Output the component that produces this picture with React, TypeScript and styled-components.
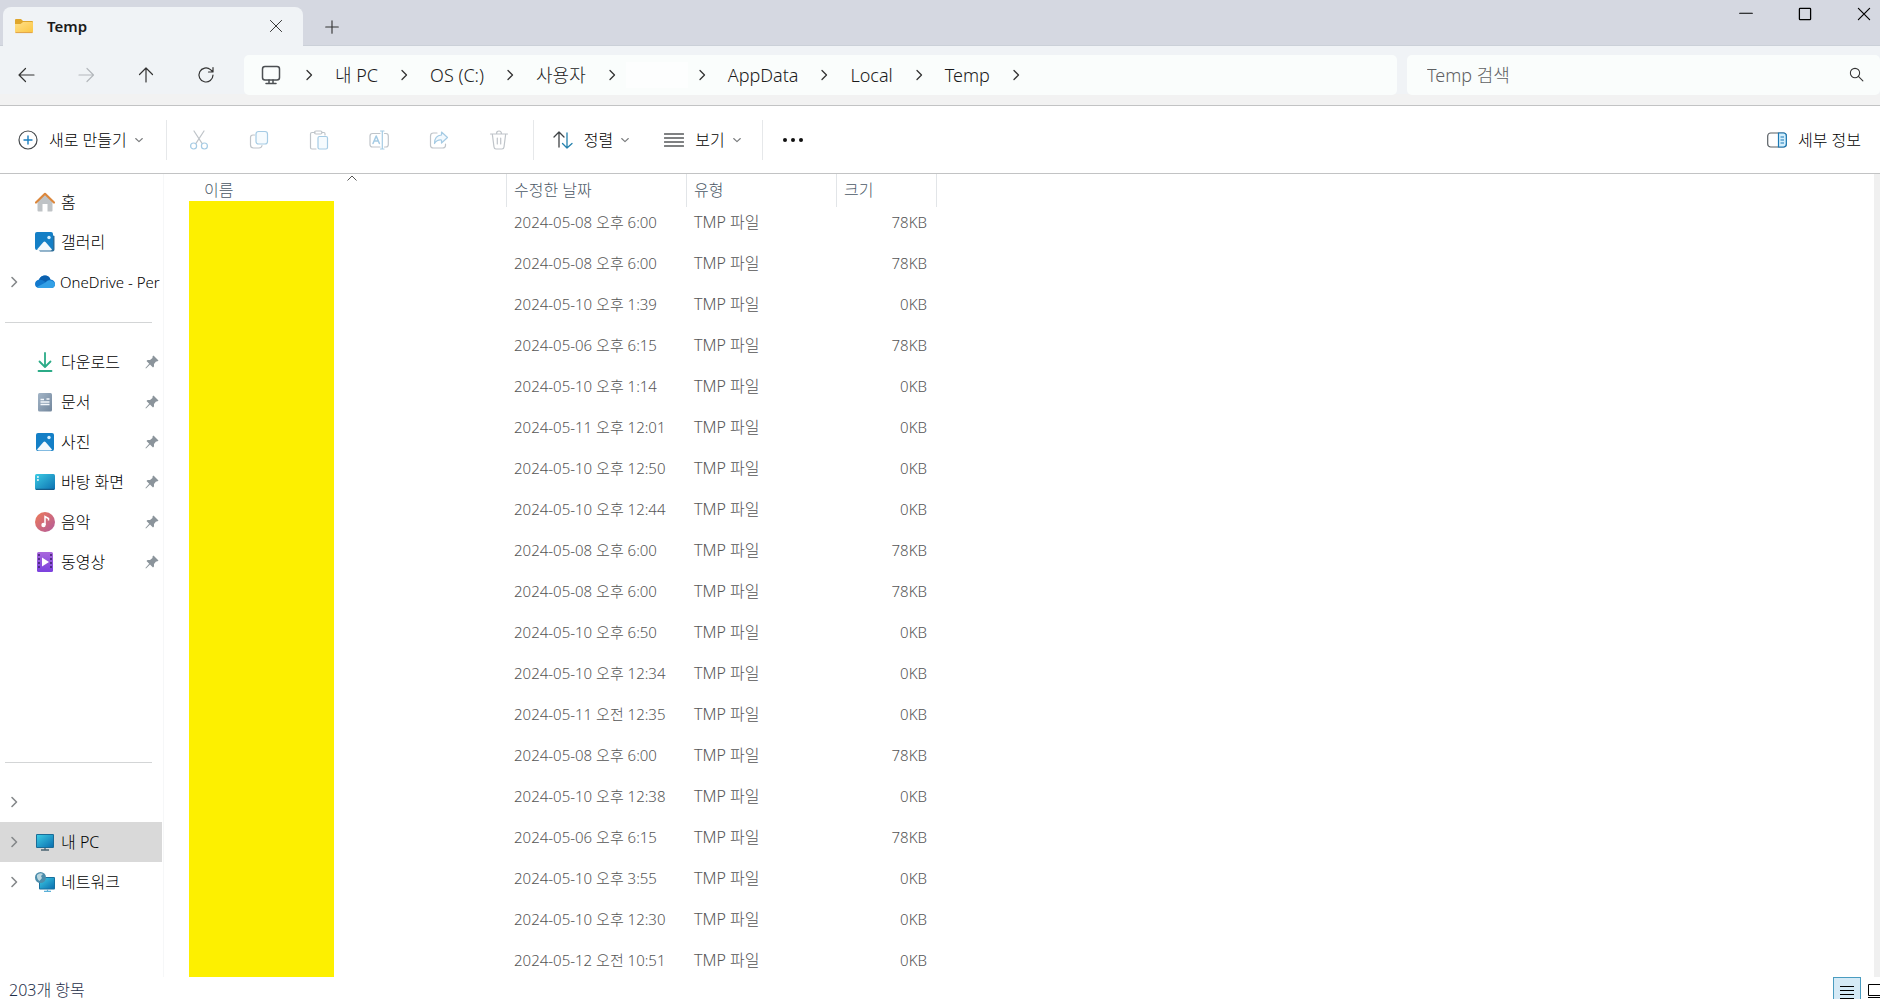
import React from 'react';
import styled, { createGlobalStyle } from 'styled-components';

const GlobalStyle = createGlobalStyle`
  *, *::before, *::after { box-sizing: border-box; }
  body {
    margin: 0;
    background: #fff;
    color: #1b1b1b;
    font-family: "Noto Sans", "Noto Sans CJK KR", sans-serif;
    font-size: 16px;
    font-weight: 300;
  }
  button, input { font: inherit; color: inherit; }
  button { border: 0; padding: 0; background: none; white-space: nowrap; }
  svg { display: block; flex: none; }
`;

const Window = styled.div`
  display: flex;
  flex-direction: column;
  height: 100vh;
  overflow: hidden;
`;

/* Title bar */
const TitleBar = styled.header`
  display: flex;
  height: 46px;
  padding-left: 3px;
  background: #d5d8e1;
  border-bottom: 1px solid #cbd0d8;
`;

const Tab = styled.div`
  display: flex;
  align-items: center;
  width: 300px;
  height: 46px;
  margin-top: 7px;
  margin-bottom: -1px;
  padding: 0 12px 8px;
  border-radius: 8px 8px 0 0;
  background: #f0f3f6;
`;

const TabTitle = styled.span`
  flex: 1;
  padding-left: 12px;
  font-size: 15px;
  font-weight: 600;
`;

const IconButton = styled.button<{ $w?: number; $h?: number }>`
  display: flex;
  align-items: center;
  justify-content: center;
  flex: none;
  width: ${(p) => p.$w ?? 60}px;
  height: ${(p) => p.$h ?? 40}px;
`;

const WindowControls = styled.div`
  display: flex;
  margin-left: auto;
  margin-right: -13px;
`;

/* Navigation bar */
const NavBar = styled.nav`
  display: flex;
  align-items: center;
  height: 60px;
  padding-bottom: 2px;
  background: linear-gradient(#f0f3f6 82%, #f2f2f2 82%);
  border-bottom: 1px solid #c2c3c4;
`;

const NavButtons = styled.div`
  display: flex;
  width: 244px;
  margin-left: -4px;
  margin-right: 4px;
`;

const AddressBar = styled.div`
  display: flex;
  align-items: center;
  flex: 1;
  height: 40px;
  padding-left: 17px;
  border-radius: 5px;
  background: #fafdfc;
`;

const Crumbs = styled.ol`
  display: flex;
  align-items: center;
  margin: 0;
  padding: 0 0 0 22px;
  list-style: none;
  font-size: 18px;
`;

const Crumb = styled.li`
  display: flex;
  align-items: center;
`;

const CrumbButton = styled.button<{ $blank?: boolean }>`
  height: 26px;
  margin: 0 20px;
  line-height: 24px;
  ${(p) => p.$blank && 'width: 62px; margin: 0 8px; background: #fdfefe;'}
`;

const SearchBox = styled.label`
  display: flex;
  align-items: center;
  width: 473px;
  height: 40px;
  margin-left: 10px;
  padding: 0 16px 0 20px;
  border-radius: 5px;
  background: #fafdfc;
`;

const SearchInput = styled.input`
  flex: 1;
  min-width: 0;
  border: 0;
  padding: 0;
  outline: 0;
  background: none;
  font-size: 18px;
  &::placeholder { color: #5f6163; opacity: 1; }
`;

/* Command bar */
const CommandBar = styled.div`
  display: flex;
  align-items: center;
  height: 68px;
  padding: 0 19px 0 18px;
  border-bottom: 1px solid #c2c3c4;
`;

const Command = styled.button<{ $after?: number }>`
  display: flex;
  align-items: center;
  gap: 7px;
  height: 40px;
  margin-right: ${(p) => p.$after ?? 0}px;
  color: #000;
  line-height: 24px;
`;

const CommandLabel = styled.span`
  padding-left: 4px;
`;

const Separator = styled.span<{ $left: number; $right: number }>`
  width: 1px;
  height: 40px;
  margin: 0 ${(p) => p.$right}px 0 ${(p) => p.$left}px;
  background: #e6e8ea;
`;

const Spacer = styled.div`
  flex: 1;
`;

/* Body */
const Body = styled.div`
  display: flex;
  flex: 1;
  min-height: 0;
`;

const Sidebar = styled.aside`
  display: flex;
  flex-direction: column;
  flex: none;
  width: 164px;
  padding: 8px 1px 0 0;
  border-right: 1px solid #f6f7f8;
  overflow: hidden;
`;

const SideItem = styled.a<{ $active?: boolean }>`
  display: flex;
  align-items: center;
  height: 40px;
  flex: none;
  padding: 0 3px 0 8px;
  overflow: hidden;
  color: #000;
  text-decoration: none;
  white-space: nowrap;
  background: ${(p) => (p.$active ? '#d9d9d9' : 'transparent')};
`;

const Twist = styled.span`
  flex: none;
  width: 27px;
`;

const SideLabel = styled.span<{ $latin?: boolean }>`
  flex: 1;
  min-width: 0;
  padding-left: ${(p) => (p.$latin ? 5 : 6)}px;
  line-height: 24px;
  font-size: ${(p) => (p.$latin ? 15 : 16)}px;
`;

const SideRule = styled.hr`
  flex: none;
  width: 147px;
  height: 1px;
  margin: 20px 0 19px 5px;
  border: 0;
  background: #d3d5d6;
`;

const SideGap = styled.div`
  height: 160px;
  flex: none;
`;

const Files = styled.main`
  position: relative;
  flex: 1;
  overflow: hidden;
`;

const FileTable = styled.table`
  width: 773px;
  table-layout: fixed;
  border-collapse: separate;
  border-spacing: 0;
`;

const Th = styled.th<{ $w: number; $first?: boolean }>`
  width: ${(p) => p.$w}px;
  height: 33px;
  padding: 0 0 2px ${(p) => (p.$first ? 40 : 7)}px;
  border-right: 1px solid #e2e5e8;
  color: #4b5866;
  font-weight: 300;
  line-height: 24px;
  text-align: left;
`;

const Td = styled.td<{ $right?: boolean; $large?: boolean }>`
  height: 41px;
  padding: 0 10px 10px 7px;
  color: #555;
  font-size: ${(p) => (p.$large ? 16 : 15)}px;
  line-height: 31px;
  white-space: nowrap;
  text-align: ${(p) => (p.$right ? 'right' : 'left')};
`;

const SortMark = styled.svg`
  position: absolute;
  top: 1px;
  left: 182px;
`;

const NameCover = styled.div`
  position: absolute;
  top: 27px;
  bottom: 0;
  left: 25px;
  width: 145px;
  background: #fdf000;
`;

const ScrollTrack = styled.div`
  flex: none;
  width: 6px;
  background: #f0f0f0;
`;

const StatusBar = styled.footer`
  display: flex;
  flex: none;
  height: 22px;
  padding-left: 9px;
  color: #1f2f4a;
`;

const ItemCount = styled.span`
  padding-top: 4px;
  line-height: 18px;
`;

const ViewButton = styled.button<{ $on?: boolean }>`
  display: flex;
  justify-content: ${(p) => (p.$on ? 'center' : 'flex-end')};
  flex: none;
  width: ${(p) => (p.$on ? 28 : 19)}px;
  height: 28px;
  padding-top: ${(p) => (p.$on ? 8 : 7)}px;
  ${(p) => p.$on && 'border: 1px solid #4a9cc0; background: #d5eaf6;'}
`;

const Chevron = ({ dir, size = 12, color = '#333', width = 1.3 }: { dir: 'right' | 'down'; size?: number; color?: string; width?: number }) => (
  <svg width={size} height={size} viewBox="0 0 12 12" fill="none" stroke={color} strokeWidth={width} strokeLinecap="round" strokeLinejoin="round">
    <path d={dir === 'right' ? 'M4 1.5 8.5 6 4 10.5' : 'M2 4.2 6 8 10 4.2'} />
  </svg>
);

const Line = ({ children, color = '#333', size = 20, w = 1.2 }: { children: React.ReactNode; color?: string; size?: number; w?: number }) => (
  <svg width={size} height={size} viewBox="0 0 20 20" fill="none" stroke={color} strokeWidth={w} strokeLinecap="round" strokeLinejoin="round">
    {children}
  </svg>
);

const FolderIcon = () => (
  <svg width="20" height="16" viewBox="0 0 20 16">
    <defs>
      <linearGradient id="folder" x1="0" y1="0" x2="1" y2="1">
        <stop offset="0" stopColor="#ffe08a" />
        <stop offset="1" stopColor="#fbc540" />
      </linearGradient>
    </defs>
    <path d="M0 2Q0 1 1 1H6L8 3H17Q18 3 18 4V8H0Z" fill="#dfa62c" />
    <path d="M0 6H5.5L8 4H17Q18 4 18 5V13.5Q18 15 16.5 15H1.5Q0 15 0 13.5Z" fill="url(#folder)" />
    <path d="M.5 14.6H17.5" stroke="#e0a34a" strokeWidth="1" />
  </svg>
);

const pale = '#bfc4c9';
const paleBlue = '#a5cbe4';

const CutIcon = () => (
  <Line color={pale}>
    <path d="M5 1 13.2 13.6M15 1 6.8 13.6" />
    <g stroke={paleBlue}><circle cx="4.600" cy="16" r="3" /><circle cx="15.400" cy="16" r="3" /></g>
  </Line>
);
const CopyIcon = () => (
  <Line color={pale}>
    <path d="M5.5 5H4Q1.500 5 1.500 7.500V15Q1.500 18 4.500 18H10Q12.500 18 13 15.500" />
    <rect x="7" y="1.500" width="11.500" height="12.500" rx="2.500" stroke={paleBlue} fill="#f6fbfe" />
  </Line>
);
const PasteIcon = () => (
  <Line color={pale}>
    <path d="M6 2.500H3Q1.500 2.500 1.500 4V17.500Q1.500 19 3 19H7M13 2.500H15Q16 2.500 16 4V5" />
    <rect x="5.500" y="1" width="7.500" height="3" rx="1.500" />
    <rect x="9" y="6.500" width="9.500" height="12.500" rx="1.500" stroke={paleBlue} fill="#f6fbfe" />
  </Line>
);
const RenameIcon = () => (
  <Line color={pale}>
    <path d="M11 3.500H3.500Q1 3.500 1 6V14.500Q1 17 3.500 17H11M15.500 3.500H17Q19.300 3.500 19.300 6V14.500Q19.300 17 17 17H15.500" />
    <g stroke={paleBlue}><path d="M13.300 1V19M11.500 1H15M11.500 19H15" /><path d="M4 13.500 7.200 6 10.400 13.500M5.200 11H9.200" strokeWidth="1.500" /></g>
  </Line>
);
const ShareIcon = () => (
  <Line color={pale}>
    <path d="M8 3H4.500Q1.500 3 1.500 6V15.500Q1.500 18 4.500 18H13.500Q16.500 18 16.500 15.500V14" />
    <path d="M12.500 2 18.500 7.500 12.500 13V10Q8 9.500 5.500 13.500Q5.500 5.500 12.500 5Z" stroke={paleBlue} fill="#f2f9fe" />
  </Line>
);
const TrashIcon = () => (
  <Line color={pale}>
    <path d="M1.500 4H18.500M3.300 4 5 17Q5.200 19 7 19H13Q14.800 19 15 17L16.700 4M7.500 4Q7.500 1 10 1Q12.500 1 12.500 4M8.300 8V14M11.700 8V14" />
  </Line>
);

const Pin = () => (
  <svg width="14" height="14" viewBox="0 0 14 14">
    <path d="M8.500 .5 13.500 5.500 12 6.500 11 6.500 9 9 9 11.500 8 12.500 5 9.500 1 13.500 .4 13 4.200 8.800 1.500 6 2.500 5 5 5 7.500 3 7.500 1.500Z" fill="#8b949b" />
  </svg>
);

const HomeIcon = () => (
  <svg width="20" height="20" viewBox="0 0 20 20">
    <path d="M2.500 9 10 2.500 17.500 9V18.500Q17.500 19.500 16.500 19.500H12.500V12H7.500V19.500H3.500Q2.500 19.500 2.500 18.500Z" fill="#bfc3c6" />
    <path d="M1 10.500 10 1.800 19 10.500" fill="none" stroke="#dc873c" strokeWidth="2.200" strokeLinecap="round" strokeLinejoin="round" />
  </svg>
);
const PictureIcon = ({ stacked }: { stacked?: boolean }) => (
  <svg width="20" height="20" viewBox="0 0 20 20">
    {stacked && <path d="M5 19.500H17.500Q19.500 19.500 19.500 17.500V4L17 3V17H3Z" fill="#2c6d99" />}
    <rect x={stacked ? 0 : 1} y={stacked ? 0 : 1} width="18" height="18" rx="2" fill="#147fc6" />
    <path d="M2 17.500 8.500 10Q9.500 9 10.500 10L17 17.500Q16.500 18.500 15.500 18.500H3.500Z" fill="#f2f8fc" />
    <circle cx="14" cy="5.500" r="1.700" fill="#d8f1ff" />
  </svg>
);
const CloudIcon = () => (
  <svg width="20" height="14" viewBox="0 0 20 14">
    <path d="M5 13Q0 13 0 9Q0 5.500 4 4.500Q6 .5 10 .5Q14 .5 15.500 4.500Q20 5 20 9Q20 13 16 13Z" fill="#1379cd" />
    <path d="M4 4.500Q6 .5 10 .5Q14 .5 15.500 4.500Q12 5 10.500 7Q8 4.500 4 4.500Z" fill="#0b60ae" />
    <path d="M2 12 10.500 7.500Q14 4 17 6Q20 7 20 9.500Q19.500 13 16 13H5Q3 13 2 12Z" fill="#33a0e6" />
  </svg>
);
const DownloadIcon = () => (
  <svg width="20" height="20" viewBox="0 0 20 20" fill="none" stroke="#2bab87" strokeWidth="1.800" strokeLinecap="round" strokeLinejoin="round">
    <path d="M10 1V14.500M4.500 9.500 10 15 15.500 9.500M3.500 19H16.500" />
  </svg>
);
const DocumentIcon = () => (
  <svg width="20" height="20" viewBox="0 0 20 20">
    <defs><linearGradient id="doc" x1="0" y1="0" x2="1" y2="1"><stop offset="0" stopColor="#a3b5c7" /><stop offset="1" stopColor="#72869c" /></linearGradient></defs>
    <rect x="3" y="1" width="14" height="18.500" rx="1.500" fill="url(#doc)" />
    <path d="M5.500 7.500H9M5.500 10H14.500M5.500 12.500H14.500M11.500 7H14.500" stroke="#f3f7fb" strokeWidth="1.300" />
  </svg>
);
const DesktopIcon = () => (
  <svg width="20" height="20" viewBox="0 0 20 20">
    <defs><linearGradient id="desk" x1="0" y1="0" x2="1" y2="1"><stop offset="0" stopColor="#3ccbe4" /><stop offset="1" stopColor="#0b6fb0" /></linearGradient></defs>
    <rect y="2" width="20" height="16" rx="1.500" fill="url(#desk)" />
    <path d="M2 5H3.800M2 8H3.800" stroke="#fff" strokeWidth="1.500" />
    <path d="M1 17.300H19" stroke="#14507d" />
  </svg>
);
const MusicIcon = () => (
  <svg width="20" height="20" viewBox="0 0 20 20">
    <defs><linearGradient id="music" x1="0" y1="0" x2="1" y2="1"><stop offset="0" stopColor="#ee7b58" /><stop offset="1" stopColor="#b25a9c" /></linearGradient></defs>
    <circle cx="10" cy="10" r="10" fill="url(#music)" />
    <circle cx="8.500" cy="13" r="2.200" fill="#fff" />
    <path d="M10 13V4.500L13.500 6.500V8.500" fill="none" stroke="#fff" strokeWidth="1.500" />
  </svg>
);
const VideoIcon = () => (
  <svg width="20" height="20" viewBox="0 0 20 20">
    <defs><linearGradient id="video" x1="0" y1="0" x2="0" y2="1"><stop offset="0" stopColor="#a968dc" /><stop offset="1" stopColor="#7b41de" /></linearGradient></defs>
    <rect x="2" y="0" width="16" height="20" rx="1.500" fill="url(#video)" />
    <path d="M4 2V18M16 2V18" stroke="#402472" strokeWidth="1.600" strokeDasharray="2 2" />
    <path d="M7 5.500 14 10 7 14.500Z" fill="#fff" />
  </svg>
);
const PcIcon = () => (
  <svg width="20" height="20" viewBox="0 0 20 20">
    <rect x="1" y="2" width="18" height="14" rx="1" fill="#1a6c97" />
    <rect x="2" y="3" width="16" height="12" fill="url(#desk)" />
    <path d="M10 16V18M6 18H14" stroke="#4b6472" strokeWidth="1.300" />
  </svg>
);
const NetworkIcon = () => (
  <svg width="20" height="20" viewBox="0 0 20 20">
    <rect x="4" y="5" width="16" height="12.500" rx="1" fill="#17719f" />
    <rect x="5" y="6" width="14" height="10.500" fill="url(#desk)" />
    <path d="M12.500 17.500V19M9 19.400H16" stroke="#5bb0d8" strokeWidth="1.200" />
    <circle cx="5.500" cy="5.500" r="5.500" fill="#4d8dab" />
    <path d="M2 3Q5 0 8 2L6 4 7 6 4.500 9Q1.500 7 2 3Z" fill="#b9d6df" />
  </svg>
);

const crumbs = ['내 PC', 'OS (C:)', '사용자', '', 'AppData', 'Local', 'Temp'];

const files: [string, string][] = [
  ['2024-05-08 오후 6:00', '78KB'],
  ['2024-05-08 오후 6:00', '78KB'],
  ['2024-05-10 오후 1:39', '0KB'],
  ['2024-05-06 오후 6:15', '78KB'],
  ['2024-05-10 오후 1:14', '0KB'],
  ['2024-05-11 오후 12:01', '0KB'],
  ['2024-05-10 오후 12:50', '0KB'],
  ['2024-05-10 오후 12:44', '0KB'],
  ['2024-05-08 오후 6:00', '78KB'],
  ['2024-05-08 오후 6:00', '78KB'],
  ['2024-05-10 오후 6:50', '0KB'],
  ['2024-05-10 오후 12:34', '0KB'],
  ['2024-05-11 오전 12:35', '0KB'],
  ['2024-05-08 오후 6:00', '78KB'],
  ['2024-05-10 오후 12:38', '0KB'],
  ['2024-05-06 오후 6:15', '78KB'],
  ['2024-05-10 오후 3:55', '0KB'],
  ['2024-05-10 오후 12:30', '0KB'],
  ['2024-05-12 오전 10:51', '0KB'],
];

type SideEntryProps = { icon?: React.ReactNode; label?: string; expand?: boolean; pinned?: boolean; active?: boolean; latin?: boolean };

const SideEntry = ({ icon, label, expand, pinned, active, latin }: SideEntryProps) => (
  <SideItem href="#" $active={active} aria-label={label || '폴더'}>
    <Twist>{expand && <Chevron dir="right" color="#85888a" width={1.6} />}</Twist>
    {icon}
    <SideLabel $latin={latin}>{label}</SideLabel>
    {pinned && <Pin />}
  </SideItem>
);

export default function App() {
  return (
    <Window>
      <GlobalStyle />
      <TitleBar>
        <Tab>
          <FolderIcon />
          <TabTitle>Temp</TabTitle>
          <IconButton $w={30} $h={30} aria-label="탭 닫기">
            <Line size={14} w={1.4}><path d="M2 2 18 18M18 2 2 18" /></Line>
          </IconButton>
        </Tab>
        <IconButton $w={58} $h={54} aria-label="새 탭">
          <Line size={14} w={1.6}><path d="M10 1V19M1 10H19" /></Line>
        </IconButton>
        <WindowControls>
          <IconButton $w={59} $h={28} aria-label="최소화"><Line size={14} color="#000" w={1.6}><path d="M1 9H19" /></Line></IconButton>
          <IconButton $w={59} $h={28} aria-label="최대화"><Line size={14} color="#000" w={1.8}><rect x="2" y="2" width="16" height="16" rx="1" /></Line></IconButton>
          <IconButton $w={59} $h={28} aria-label="닫기"><Line size={14} color="#000" w={1.7}><path d="M2 2 18 18M18 2 2 18" /></Line></IconButton>
        </WindowControls>
      </TitleBar>

      <NavBar>
        <NavButtons>
          <IconButton aria-label="뒤로"><Line><path d="M18 10H3M9.500 3.500 3 10 9.500 16.500" /></Line></IconButton>
          <IconButton aria-label="앞으로"><Line color="#b4b8bc"><path d="M3 10H17M11 3.500 17.500 10 11 16.500" /></Line></IconButton>
          <IconButton aria-label="위로"><Line><path d="M10 17V3M3.500 9.500 10 3 16.500 9.500" /></Line></IconButton>
          <IconButton aria-label="새로 고침"><Line><path d="M17 10A7 7 0 1 1 14.500 4.600L16.500 6.500M17 2.500V7H12.500" /></Line></IconButton>
        </NavButtons>
        <AddressBar>
          <Line w={1.5} color="#4b4f52"><rect x="1.500" y="1.500" width="17" height="13.500" rx="2.500" /><path d="M8 15V18M12 15V18M5 18.500H15" /></Line>
          <Crumbs>
            <Chevron dir="right" />
            {crumbs.map((name) => (
              <Crumb key={name}>
                <CrumbButton $blank={!name} aria-label={name || '사용자 폴더'}>{name}</CrumbButton>
                <Chevron dir="right" />
              </Crumb>
            ))}
          </Crumbs>
        </AddressBar>
        <SearchBox>
          <SearchInput type="text" placeholder="Temp 검색" aria-label="Temp 검색" />
          <Line size={15} w={1.4}><circle cx="8" cy="8" r="6.200" /><path d="M12.500 12.500 18.500 18.500" /></Line>
        </SearchBox>
      </NavBar>

      <CommandBar>
        <Command>
          <Line color="#45494c"><circle cx="10" cy="10" r="9" /><path d="M10 6V14M6 10H14" stroke="#1a7fc0" strokeWidth="1.400" /></Line>
          <CommandLabel>새로 만들기</CommandLabel>
          <Chevron dir="down" size={10} color="#77797b" />
        </Command>
        <Separator $left={22} $right={2} />
        <IconButton aria-label="잘라내기"><CutIcon /></IconButton>
        <IconButton aria-label="복사"><CopyIcon /></IconButton>
        <IconButton aria-label="붙여넣기"><PasteIcon /></IconButton>
        <IconButton aria-label="이름 바꾸기"><RenameIcon /></IconButton>
        <IconButton aria-label="공유"><ShareIcon /></IconButton>
        <IconButton aria-label="삭제"><TrashIcon /></IconButton>
        <Separator $left={4} $right={19} />
        <Command $after={34}>
          <Line color="#3f4346" w={1.3}><path d="M6 17V2M1 7 6 2 11 7" /><path d="M14 3V18M9.500 13.500 14 18 19 13.500" stroke="#2481ad" /></Line>
          <CommandLabel>정렬</CommandLabel>
          <Chevron dir="down" size={10} color="#77797b" />
        </Command>
        <Command>
          <Line color="#55585a" w={1.3}><path d="M.5 4H19.500M.5 8H19.500M.5 12H19.500M.5 16H19.500" /></Line>
          <CommandLabel>보기</CommandLabel>
          <Chevron dir="down" size={10} color="#77797b" />
        </Command>
        <Separator $left={20} $right={0} />
        <IconButton aria-label="더 보기">
          <svg width="22" height="6" viewBox="0 0 22 6" fill="#111"><circle cx="3" cy="3" r="2" /><circle cx="11" cy="3" r="2" /><circle cx="19" cy="3" r="2" /></svg>
        </IconButton>
        <Spacer />
        <Command>
          <svg width="20" height="20" viewBox="0 0 20 20" fill="none">
            <rect x=".7" y="3" width="18.600" height="14" rx="3" stroke="#5a6065" strokeWidth="1.200" />
            <path d="M11.500 3H16.500Q19.300 3 19.300 6V14Q19.300 17 16.500 17H11.500Z" fill="#d4effc" stroke="#1b79b5" strokeWidth="1.200" />
            <path d="M13.500 7H17M13.500 10H17M13.500 13H17" stroke="#1b79b5" strokeWidth="1.200" />
          </svg>
          <CommandLabel>세부 정보</CommandLabel>
        </Command>
      </CommandBar>

      <Body>
        <Sidebar>
          <SideEntry icon={<HomeIcon />} label="홈" />
          <SideEntry icon={<PictureIcon stacked />} label="갤러리" />
          <SideEntry icon={<CloudIcon />} label="OneDrive - Per" expand latin />
          <SideRule />
          <SideEntry icon={<DownloadIcon />} label="다운로드" pinned />
          <SideEntry icon={<DocumentIcon />} label="문서" pinned />
          <SideEntry icon={<PictureIcon />} label="사진" pinned />
          <SideEntry icon={<DesktopIcon />} label="바탕 화면" pinned />
          <SideEntry icon={<MusicIcon />} label="음악" pinned />
          <SideEntry icon={<VideoIcon />} label="동영상" pinned />
          <SideGap />
          <SideRule />
          <SideEntry expand />
          <SideEntry icon={<PcIcon />} label="내 PC" expand active />
          <SideEntry icon={<NetworkIcon />} label="네트워크" expand />
        </Sidebar>
        <Files>
          <FileTable>
            <thead>
              <tr>
                <Th $w={343} $first>이름</Th>
                <Th $w={180}>수정한 날짜</Th>
                <Th $w={150}>유형</Th>
                <Th $w={100}>크기</Th>
              </tr>
            </thead>
            <tbody>
              {files.map(([date, size], i) => (
                <tr key={i}>
                  <Td />
                  <Td>{date}</Td>
                  <Td $large>TMP 파일</Td>
                  <Td $right>{size}</Td>
                </tr>
              ))}
            </tbody>
          </FileTable>
          <SortMark width="12" height="6" viewBox="0 0 12 6" fill="none" stroke="#555">
            <path d="M1.500 5.500 6 1 10.500 5.500" />
          </SortMark>
          <NameCover />
        </Files>
        <ScrollTrack />
      </Body>

      <StatusBar>
        <ItemCount>203개 항목</ItemCount>
        <Spacer />
        <ViewButton $on aria-label="자세히">
          <svg width="14" height="14" viewBox="0 0 14 14" stroke="#000"><path d="M0 .5H14M0 4.500H14M0 8.500H14M0 12.500H14" /></svg>
        </ViewButton>
        <ViewButton aria-label="큰 아이콘">
          <svg width="12" height="16" viewBox="0 0 12 16" fill="none" stroke="#000"><path d="M13 .5H.5V11.500H13M0 13.500H12" /></svg>
        </ViewButton>
      </StatusBar>
    </Window>
  );
}
